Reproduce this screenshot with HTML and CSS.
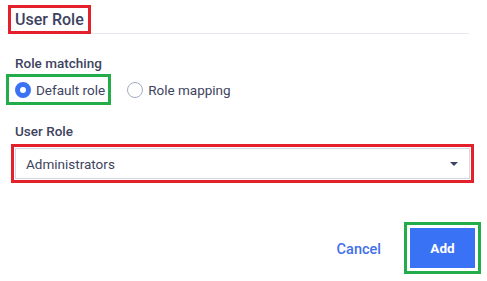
FILE: index.html
```html
<!DOCTYPE html>
<html>
<head>
<meta charset="utf-8">
<link rel="stylesheet" href="styles.css">
</head>
<body>
<div class="panel">
  <div class="header">
    <h2 class="title mark-red">User Role</h2>
  </div>
  <div class="field-label label-matching">Role matching</div>
  <div class="radio-group">
    <label class="radio-option mark-green">
      <span class="radio radio-checked"></span>
      <span class="radio-text">Default role</span>
    </label>
    <label class="radio-option option-second">
      <span class="radio"></span>
      <span class="radio-text">Role mapping</span>
    </label>
  </div>
  <div class="field-label label-role">User Role</div>
  <div class="select-mark mark-red">
    <div class="select">
      <span class="select-value">Administrators</span>
      <span class="caret"></span>
    </div>
  </div>
  <div class="actions">
    <button class="btn-cancel">Cancel</button>
    <div class="btn-mark mark-green">
      <button class="btn-add">Add</button>
    </div>
  </div>
</div>
</body>
</html>
```

FILE: styles.css
```css
* { box-sizing: border-box; }
html, body { margin: 0; padding: 0; background: #ffffff; }
body {
  font-family: Roboto, "Liberation Sans", sans-serif;
  color: #3e4460;
  width: 487px;
  height: 281px;
  overflow: hidden;
}
.panel { display: flex; flex-direction: column; }

.mark-red { border: 3px solid #e4202a; }
.mark-green { border: 3px solid #22ad4a; }

.header {
  margin: 5px 18px 0 8px;
  border-bottom: 1px solid #e6e8ee;
  display: flex;
}
.title {
  margin: 0 0 -1px 0;
  height: 29px;
  padding: 0 4px;
  font-size: 16px;
  font-weight: 500;
  line-height: 23px;
  color: #3c4262;
}

.field-label {
  font-size: 13.5px;
  font-weight: 500;
  line-height: 18px;
  height: 18px;
  color: #3e4460;
  margin-left: 15px;
}
.label-matching { margin-top: 20px; }
.label-role { margin-top: 17px; }

.radio-group {
  display: flex;
  align-items: center;
  margin: 2px 0 0 6px;
}
.radio-option {
  display: flex;
  align-items: center;
  gap: 5px;
  height: 31px;
  font-size: 13.5px;
  color: #3e4460;
}
.radio-option.mark-green { padding: 0 3px 0 6px; }
.option-second { margin-left: 16px; }
.radio {
  width: 16px;
  height: 16px;
  border-radius: 50%;
  border: 1px solid #a3abc0;
  background: #fff;
}
.radio-checked {
  border: 5px solid #3a72f4;
}

.select-mark {
  margin: 4px 13px 0 11px;
  padding: 1px;
}
.select {
  height: 31px;
  border: 1px solid #d3d8e4;
  display: flex;
  align-items: center;
  justify-content: space-between;
  padding: 0 11px 0 10px;
}
.select-value {
  font-size: 13.5px;
  color: #3e4460;
}
.caret {
  width: 0;
  height: 0;
  border-left: 4px solid transparent;
  border-right: 4px solid transparent;
  border-top: 4px solid #3b4360;
}

.actions {
  display: flex;
  justify-content: flex-end;
  align-items: center;
  margin: 39px 6px 0 0;
}
.btn-cancel {
  background: none;
  border: none;
  font-family: inherit;
  font-size: 14.5px;
  font-weight: 500;
  color: #4270ea;
  padding: 0 23px 0 12px;
  height: 40px;
  margin-top: 2px;
}
.btn-mark { padding: 3px; }
.btn-add {
  display: block;
  width: 65px;
  height: 40px;
  border: none;
  background: #3a72f6;
  color: #ffffff;
  font-family: inherit;
  font-size: 13.5px;
  font-weight: 700;
}
```
